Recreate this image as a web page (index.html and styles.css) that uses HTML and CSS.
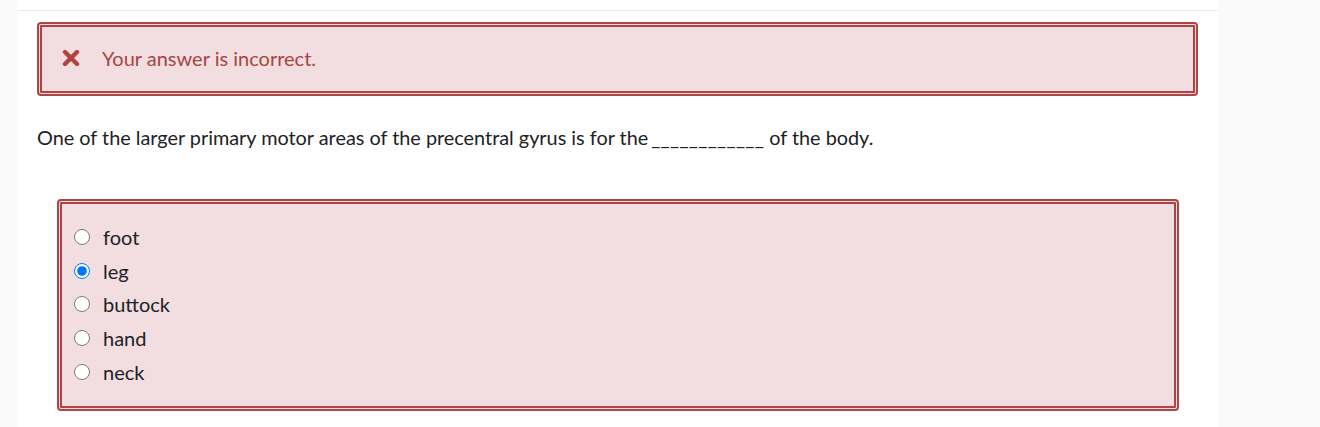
FILE: index.html
```html
<!DOCTYPE html>
<html>
<head>
<meta charset="utf-8">
<link rel="stylesheet" href="styles.css">
</head>
<body>
<div class="page">
  <div class="side-left"></div>
  <main class="main">
    <div class="divider"></div>
    <div class="feedback">
      <svg class="x-icon" width="18" height="16" viewBox="0 0 18 16" aria-hidden="true">
        <path d="M3 2 L15 14 M15 2 L3 14" stroke="#b04343" stroke-width="4.4" stroke-linecap="round"/>
      </svg>
      <span class="feedback-text">Your answer is incorrect.</span>
    </div>
    <p class="qtext">One of the larger primary motor areas of the precentral gyrus is for the<span class="blank">____________</span> of the body.</p>
    <div class="answers">
      <label class="opt"><input type="radio" name="a"><span>foot</span></label>
      <label class="opt"><input type="radio" name="a" checked><span>leg</span></label>
      <label class="opt"><input type="radio" name="a"><span>buttock</span></label>
      <label class="opt"><input type="radio" name="a"><span>hand</span></label>
      <label class="opt"><input type="radio" name="a"><span>neck</span></label>
    </div>
  </main>
  <div class="side-right"></div>
</div>
</body>
</html>
```

FILE: styles.css
```css
html, body {
  margin: 0;
  padding: 0;
  background: #fafafa;
  font-family: Lato, "Open Sans", sans-serif;
  color: #1d2125;
}
.page {
  display: flex;
  height: 427px;
}
.side-left {
  width: 18px;
  background: #fafafa;
}
.main {
  width: 1200px;
  background: #ffffff;
  padding-top: 10px;
  box-sizing: border-box;
}
.side-right {
  flex: 1;
  background: #fafafa;
}
.divider {
  height: 1px;
  background: #ebebeb;
}
.feedback {
  margin: 11px 0 0 19px;
  width: 1161px;
  height: 74px;
  box-sizing: border-box;
  border: 5px double #b04343;
  border-radius: 4px;
  background: #f2dee0;
  display: flex;
  align-items: center;
  padding-left: 20px;
  padding-bottom: 2px;
  color: #a9443f;
  font-size: 20px;
}
.x-icon {
  display: block;
  margin-right: 22px;
  margin-top: 0;
}
.qtext {
  margin: 28px 0 0 19px;
  font-size: 19.85px;
  line-height: 26px;
}
.blank {
  letter-spacing: 0.3px;
  margin-left: 3px;
}
.answers {
  margin: 49px 0 0 39px;
  width: 1122px;
  height: 212px;
  box-sizing: border-box;
  border: 5px double #b04343;
  border-radius: 4px;
  background: #f2dee0;
  padding: 16px 0 0 12px;
  display: flex;
  flex-direction: column;
}
.opt {
  display: flex;
  align-items: center;
  height: 33.75px;
  font-size: 20px;
}
.opt input {
  width: 16px;
  height: 16px;
  margin: 0 13px 0 0;
}
```
